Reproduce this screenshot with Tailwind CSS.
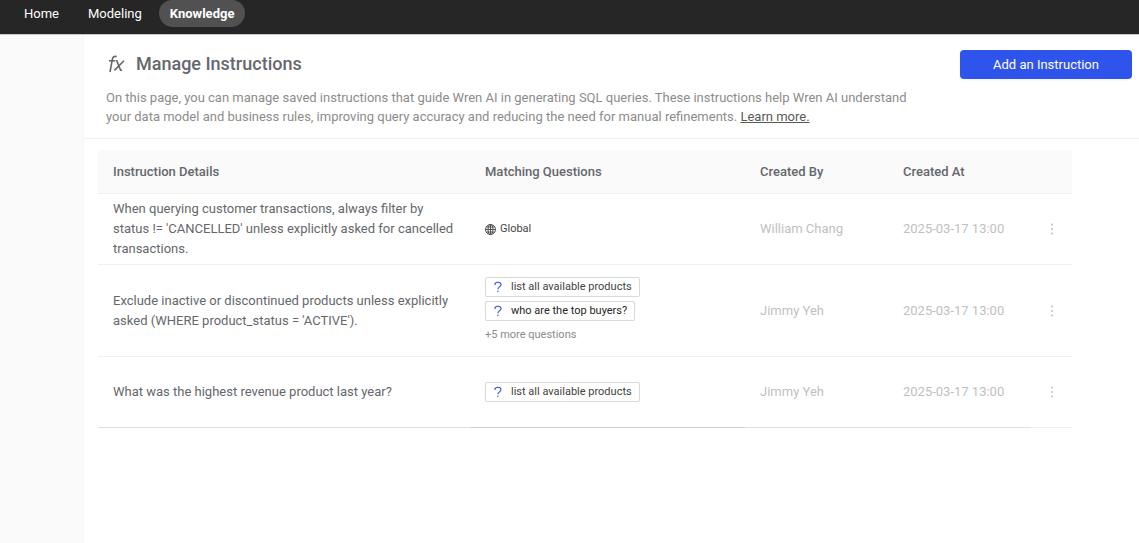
<!DOCTYPE html>
<html lang="en">
<head>
<meta charset="utf-8">
<meta name="viewport" content="width=device-width, initial-scale=1">
<title>Manage Instructions</title>
<script src="https://cdn.jsdelivr.net/npm/@tailwindcss/browser@4"></script>
</head>
<body class="flex min-h-screen flex-col bg-white font-['Roboto',sans-serif] text-[13px] text-[#65676c]">
<svg class="hidden" aria-hidden="true">
  <symbol id="question" viewBox="0 0 10 12"><path d="M1.9 4C1.9 2.2 3.1 1.3 4.9 1.3s3.1.9 3.1 2.4c0 2.3-3.1 2.1-3.1 4.6" fill="none" stroke="currentColor" stroke-width="1.1"/><circle cx="4.9" cy="10.3" r=".75" fill="currentColor"/></symbol>
  <symbol id="more" viewBox="0 0 4 12"><circle cx="2" cy="1.5" r="1"/><circle cx="2" cy="6" r="1"/><circle cx="2" cy="10.5" r="1"/></symbol>
</svg>
<header class="h-[34px] shrink-0 bg-[#262626]">
  <nav class="flex h-[27px] items-center gap-[5px] pl-3 leading-[27px] text-white">
    <a href="#" class="px-3">Home</a>
    <a href="#" class="px-3">Modeling</a>
    <a href="#" aria-current="page" class="rounded-b-[14px] rounded-t-[13px] bg-[#515151] px-[11px] font-bold">Knowledge</a>
  </nav>
</header>
<div class="flex grow border-t border-[#c9c9c9]">
  <aside class="w-[84px] shrink-0 border-r border-[#f5f5f5] bg-[#fafafa]"></aside>
  <main class="min-w-0 grow">
    <section class="border-b border-[#f0f0f0] pt-[15px] pb-3 pl-[22px] pr-[7px]">
      <div class="flex items-start justify-between">
        <h1 class="flex items-center gap-[11px] text-lg leading-7 font-medium">
          <svg class="h-5 w-[19px]" viewBox="0 0 19 20" fill="none" stroke="currentColor" stroke-width="1.6" aria-hidden="true"><path d="M10.6 2.6C7.8 1.9 6.8 3.2 6.4 5.2L4 18M3 6.8h6.4M10 6.8h.8l3.8 9.4h1.5M18 6.8 8.4 16.4"/></svg>
          Manage Instructions
        </h1>
        <button type="button" class="h-[29px] w-[172px] rounded bg-[#2f54eb] text-white shadow-xs">Add an Instruction</button>
      </div>
      <p class="mt-[9px] max-w-[815px] leading-[19px] text-[#8c8c8c]">On this page, you can manage saved instructions that guide Wren AI in generating SQL queries. These instructions help Wren AI understand your data model and business rules, improving query accuracy and reducing the need for manual refinements. <a href="#" class="text-[#595959] underline">Learn more.</a></p>
    </section>
    <div class="mt-[11px] mr-[67px] ml-[14px]">
      <table class="w-full table-fixed border-separate border-spacing-0 text-left leading-5">
        <colgroup><col><col class="w-[275px]"><col class="w-[143px]"><col class="w-[142px]"><col class="w-[42px]"></colgroup>
        <thead class="bg-[#fafafa]">
          <tr class="h-11 *:border-b *:border-[#f0f0f0] *:px-[15px] *:font-medium">
            <th scope="col">Instruction Details</th><th scope="col">Matching Questions</th><th scope="col">Created By</th><th scope="col">Created At</th><td></td>
          </tr>
        </thead>
        <tbody class="text-[#bfbfbf]">
          <tr class="h-[71px] *:border-b *:border-[#f0f0f0] *:px-[15px]">
            <td class="text-[#65676c]">When querying customer transactions, always filter by status != 'CANCELLED' unless explicitly asked for cancelled transactions.</td>
            <td><span class="flex items-center gap-1 text-[11px] text-[#434343]"><svg class="size-[11px]" viewBox="0 0 11 11" fill="none" stroke="currentColor" stroke-width=".9" aria-hidden="true"><circle cx="5.5" cy="5.5" r="5"/><ellipse cx="5.5" cy="5.5" rx="2.4" ry="5"/><path d="M5.5.5v10M.5 5.5h10M1.3 3h8.4M1.3 8h8.4"/></svg>Global</span></td>
            <td>William Chang</td><td>2025-03-17 13:00</td>
            <td><button type="button" aria-label="More" class="flex h-5 w-[14px] items-center justify-center"><svg class="h-3 w-1 fill-current"><use href="#more"/></svg></button></td>
          </tr>
          <tr class="h-[92px] *:border-b *:border-[#f0f0f0] *:px-[15px]">
            <td class="text-[#65676c]">Exclude inactive or discontinued products unless explicitly asked (WHERE product_status = 'ACTIVE').</td>
            <td>
              <div class="flex flex-col items-start gap-1 text-[11px]">
                <span class="flex h-5 items-center gap-2 rounded-xs border border-[#d9d9d9] px-[7px] text-[#434343]"><svg class="h-3 w-[10px] text-[#2f54eb]" aria-hidden="true"><use href="#question"/></svg>list all available products</span>
                <span class="flex h-5 items-center gap-2 rounded-xs border border-[#d9d9d9] px-[7px] text-[#262626]"><svg class="h-3 w-[10px] text-[#2f54eb]" aria-hidden="true"><use href="#question"/></svg>who are the top buyers?</span>
                <span class="text-[#8c8c8c]">+5 more questions</span>
              </div>
            </td>
            <td>Jimmy Yeh</td><td>2025-03-17 13:00</td>
            <td><button type="button" aria-label="More" class="flex h-5 w-[14px] items-center justify-center"><svg class="h-3 w-1 fill-current"><use href="#more"/></svg></button></td>
          </tr>
          <tr class="h-[71px] *:border-b *:px-[15px]">
            <td class="border-[#e0e0e0] text-[#65676c]">What was the highest revenue product last year?</td>
            <td class="border-[#d0d0d0]">
              <div class="flex text-[11px]">
                <span class="flex h-5 items-center gap-2 rounded-xs border border-[#d9d9d9] px-[7px] text-[#434343]"><svg class="h-3 w-[10px] text-[#2f54eb]" aria-hidden="true"><use href="#question"/></svg>list all available products</span>
              </div>
            </td>
            <td class="border-[#e0e0e0]">Jimmy Yeh</td><td class="border-[#e0e0e0]">2025-03-17 13:00</td>
            <td class="border-[#f0f0f0]"><button type="button" aria-label="More" class="flex h-5 w-[14px] items-center justify-center"><svg class="h-3 w-1 fill-current"><use href="#more"/></svg></button></td>
          </tr>
        </tbody>
      </table>
    </div>
  </main>
</div>
</body>
</html>
